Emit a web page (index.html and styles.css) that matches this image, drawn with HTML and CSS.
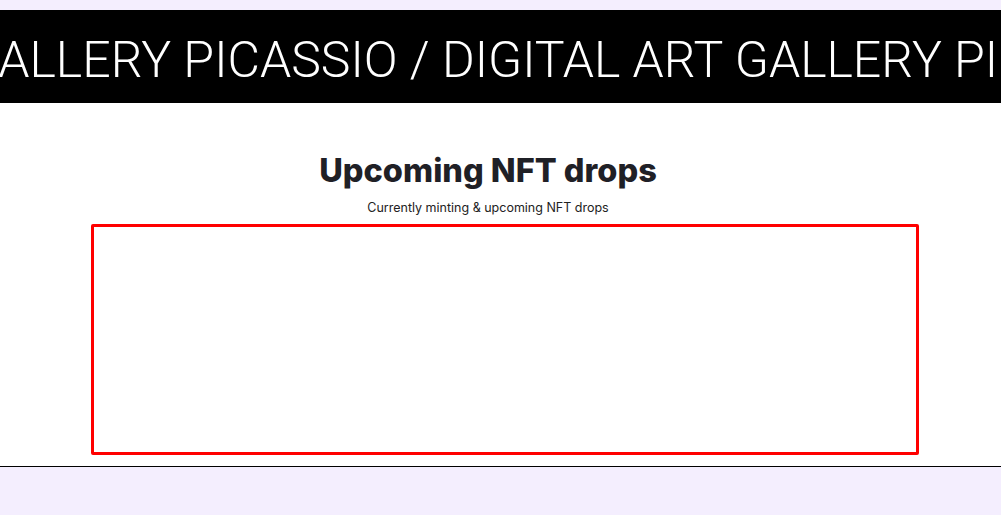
FILE: index.html
```html
<!DOCTYPE html>
<html>
<head>
<meta charset="utf-8">
<link rel="stylesheet" href="styles.css">
</head>
<body>
<div class="page">
  <div class="marquee">
    <div class="marquee-track">GALLERY PICASSIO / DIGITAL ART GALLERY PICASSIO / DIGITAL ART GALLERY PICASSIO</div>
  </div>
  <section class="drops">
    <div class="drops-head">
      <h1 class="drops-title">Upcoming NFT drops</h1>
      <p class="drops-sub">Currently minting &amp; upcoming NFT drops</p>
    </div>
    <div class="drops-box"></div>
  </section>
</div>
</body>
</html>
```
FILE: styles.css
```css
html, body {
  margin: 0;
  padding: 0;
  background: #f4eefe;
}
.page {
  padding-top: 10px;
}
.marquee {
  background: #000;
  height: 93px;
  overflow: hidden;
  display: flex;
  align-items: center;
}
.marquee-track {
  white-space: nowrap;
  color: #fff;
  font-family: "Roboto", "Liberation Sans", Arial, sans-serif;
  font-weight: 300;
  font-size: 50px;
  margin-left: -36px;
  padding-top: 6px;
}
.drops {
  background: #fff;
  border-bottom: 1px solid #000;
  display: flex;
  flex-direction: column;
  padding-top: 48px;
  padding-bottom: 11px;
}
.drops-head {
  display: flex;
  flex-direction: column;
  align-items: center;
  padding-right: 25px;
}
.drops-title {
  margin: 0;
  font-family: "Inter", "Liberation Sans", sans-serif;
  font-weight: 800;
  font-size: 32.5px;
  letter-spacing: 0;
  color: #1f2026;
  line-height: 40px;
}
.drops-sub {
  margin: 9px 0 0;
  font-family: "Inter", sans-serif;
  font-size: 12.5px;
  color: #222;
  line-height: 16px;
}
.drops-box {
  margin: 8px 0 0 91px;
  width: 822px;
  height: 225px;
  border: 3px solid #ff0000;
  border-radius: 2px;
}
```
